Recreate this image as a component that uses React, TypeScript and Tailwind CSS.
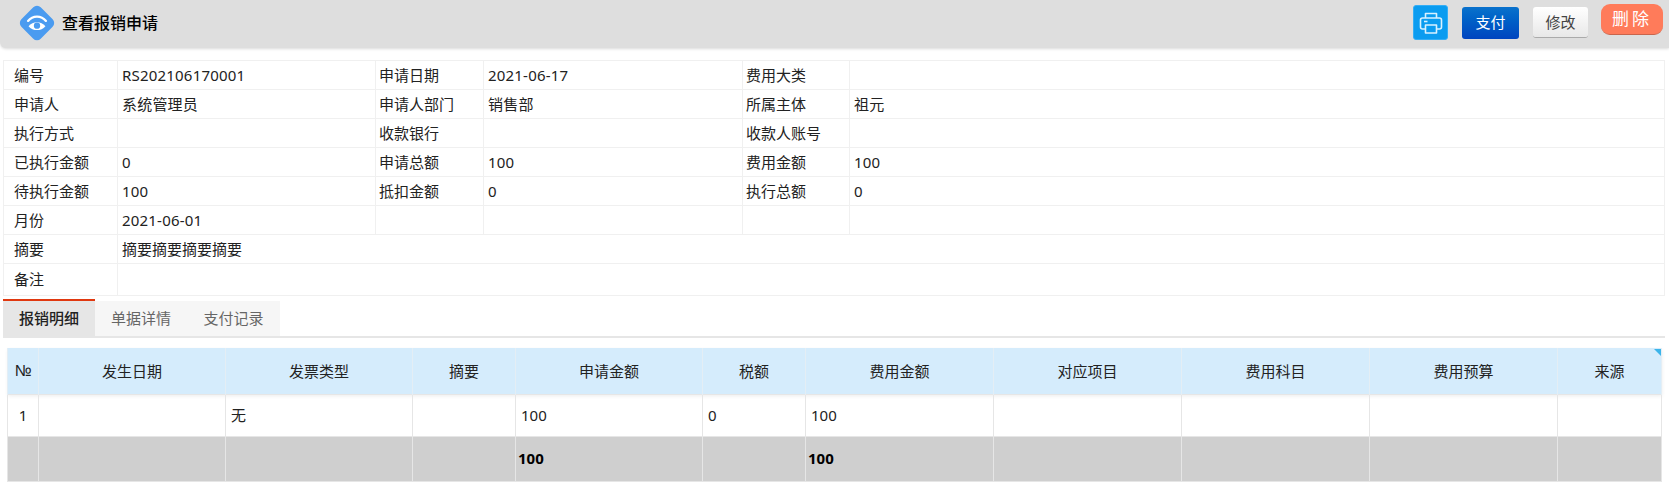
import React from 'react';

const FONT = "font-['Noto_Sans','Noto_Sans_CJK_SC',sans-serif]";

const INFO_ROWS = [
  ['编号', 'RS202106170001', '申请日期', '2021-06-17', '费用大类', ''],
  ['申请人', '系统管理员', '申请人部门', '销售部', '所属主体', '祖元'],
  ['执行方式', '', '收款银行', '', '收款人账号', ''],
  ['已执行金额', '0', '申请总额', '100', '费用金额', '100'],
  ['待执行金额', '100', '抵扣金额', '0', '执行总额', '0'],
  ['月份', '2021-06-01', '', '', '', ''],
];

const COLUMNS = [
  { title: '№', width: 31 },
  { title: '发生日期', width: 187 },
  { title: '发票类型', width: 187 },
  { title: '摘要', width: 103 },
  { title: '申请金额', width: 187 },
  { title: '税额', width: 103 },
  { title: '费用金额', width: 188 },
  { title: '对应项目', width: 188 },
  { title: '费用科目', width: 188 },
  { title: '费用预算', width: 188 },
  { title: '来源', width: 104 },
];

const BODY = ['1', '', '无', '', '100', '0', '100', '', '', '', ''];
const FOOT = ['', '', '', '', '100', '', '100', '', '', '', ''];

const Logo = () => (
  <svg width="40" height="40" viewBox="0 0 38 38">
    <rect x="6" y="6" width="26" height="26" rx="5" transform="rotate(45 19 19)" fill="#4a9bf0" />
    <path d="M10.5 17 C15 11.5 23 11.5 27.5 17" fill="none" stroke="#fff" strokeWidth="2.2" strokeLinecap="round" />
    <path d="M11 22 C15 17 23 17 27 22 C23 27 15 27 11 22 Z" fill="#fff" />
    <circle cx="19" cy="21.5" r="3" fill="#4a9bf0" />
  </svg>
);

const PrinterIcon = () => (
  <svg width="26" height="26" viewBox="0 0 26 26" fill="none" stroke="#d8f1ff" strokeWidth="1.6" strokeLinejoin="round">
    <path d="M7.5 8 V3.5 H18.5 V8" />
    <path d="M7 19 H4.5 Q2.5 19 2.5 17 V10 Q2.5 8 4.5 8 H21.5 Q23.5 8 23.5 10 V17 Q23.5 19 21.5 19 H19" />
    <path d="M7.5 15 H18.5 V23 H7.5 Z" />
    <path d="M6 11.5 H9.5" />
  </svg>
);

export default function App() {
  return (
    <div className={`w-[1669px] h-[488px] overflow-hidden bg-white text-[15px] text-[#222] ${FONT}`}>
      {/* Header */}
      <div className="h-[48px] bg-[#dedede] rounded-bl-md shadow-[0_1px_3px_rgba(0,0,0,0.15)] flex items-center pl-[17px] pr-[6px] pb-[3px]">
        <Logo />
        <h1 className="ml-[5px] text-[16px] font-medium text-black">查看报销申请</h1>
        <div className="ml-auto flex items-center">
          <button className="w-[35px] h-[35px] rounded-[3px] bg-[#0a9cf0] border border-[#34aef5] flex items-center justify-center">
            <PrinterIcon />
          </button>
          <button className="ml-[14px] w-[57px] h-[32px] rounded-[3px] bg-gradient-to-b from-[#0a72cc] to-[#0044bf] text-white">支付</button>
          <button className="ml-[14px] w-[55px] h-[31px] rounded-[3px] bg-gradient-to-b from-white to-[#e8e8e8] border-b border-[#aaa] text-[#444]">修改</button>
          <button className="ml-[13px] -mt-[6px] w-[62px] h-[31px] rounded-[9px] bg-[#ff7b5a] border-b border-[#c9654c] text-white text-[17px] tracking-[3px]">删除</button>
        </div>
      </div>

      {/* Info table */}
      <div className="pt-[12px] pl-[3px] pr-[4px]">
        <table className="w-[1662px] table-fixed border-collapse border border-[#f0f0f0]">
          <colgroup>
            <col className="w-[114px]" />
            <col className="w-[258px]" />
            <col className="w-[108px]" />
            <col className="w-[259px]" />
            <col className="w-[107px]" />
            <col />
          </colgroup>
          <tbody>
            {INFO_ROWS.map((row, idx) => (
              <tr key={idx} className="h-[29px]">
                {row.map((cell, cIdx) => (
                  <td key={cIdx} className={`border border-[#f0f0f0] align-middle ${cIdx === 0 ? 'pl-[10px]' : cIdx % 2 === 1 ? 'pl-[4px] tracking-[0.2px]' : 'pl-[3px]'}`}>
                    {cell}
                  </td>
                ))}
              </tr>
            ))}
            <tr className="h-[29px]">
              <td className="border border-[#f0f0f0] pl-[10px]">摘要</td>
              <td colSpan={5} className="border border-[#f0f0f0] pl-[4px]">摘要摘要摘要摘要</td>
            </tr>
            <tr className="h-[32px]">
              <td className="border border-[#f0f0f0] pl-[10px]">备注</td>
              <td colSpan={5} className="border border-[#f0f0f0] pl-[4px]"></td>
            </tr>
          </tbody>
        </table>
      </div>

      {/* Tabs */}
      <div className="mt-[4px] ml-[3px] mr-[4px] h-[38px] border-b-2 border-[#e6e6e6] flex items-end">
        <div className="w-[92px] h-[37px] border-t-2 border-[#e0380f] bg-[#e6e6e6] font-medium text-[#222] flex items-center justify-center">报销明细</div>
        <div className="w-[92px] h-[35px] bg-[#f6f6f6] text-[#666] flex items-center justify-center">单据详情</div>
        <div className="w-[93px] h-[35px] bg-[#f6f6f6] text-[#666] flex items-center justify-center">支付记录</div>
      </div>

      {/* Detail table */}
      <div className="relative mt-[10px] ml-[7px] w-[1655px]">
        <table className="w-full table-fixed border-collapse">
          <colgroup>
            {COLUMNS.map((col) => (
              <col key={col.title} style={{ width: col.width }} />
            ))}
          </colgroup>
          <thead>
            <tr className="h-[46px] bg-[#d5ecfc] shadow-[0_2px_4px_rgba(0,0,0,0.08)]">
              {COLUMNS.map((col) => (
                <th key={col.title} className="border-x border-[#e4eef5] font-normal text-center">
                  {col.title === '№' ? <span className="font-['Liberation_Sans',sans-serif] text-[16px]">№</span> : col.title}
                </th>
              ))}
            </tr>
          </thead>
          <tbody>
            <tr className="h-[42px]">
              {BODY.map((cell, idx) => (
                <td key={idx} className={`border border-[#e6e6e6] ${idx === 0 ? 'text-center' : 'text-left pl-[5px]'}`}>{cell}</td>
              ))}
            </tr>
            <tr className="h-[45px] bg-[#cfcfcf]">
              {FOOT.map((cell, idx) => (
                <td key={idx} className="border border-[#e6e6e6] font-bold text-black pl-[2px]">{cell}</td>
              ))}
            </tr>
          </tbody>
        </table>
        <div className="absolute top-[1px] right-[1px] w-0 h-0 border-t-[7px] border-l-[7px] border-t-[#3bb4ea] border-l-transparent" />
      </div>
    </div>
  );
}
